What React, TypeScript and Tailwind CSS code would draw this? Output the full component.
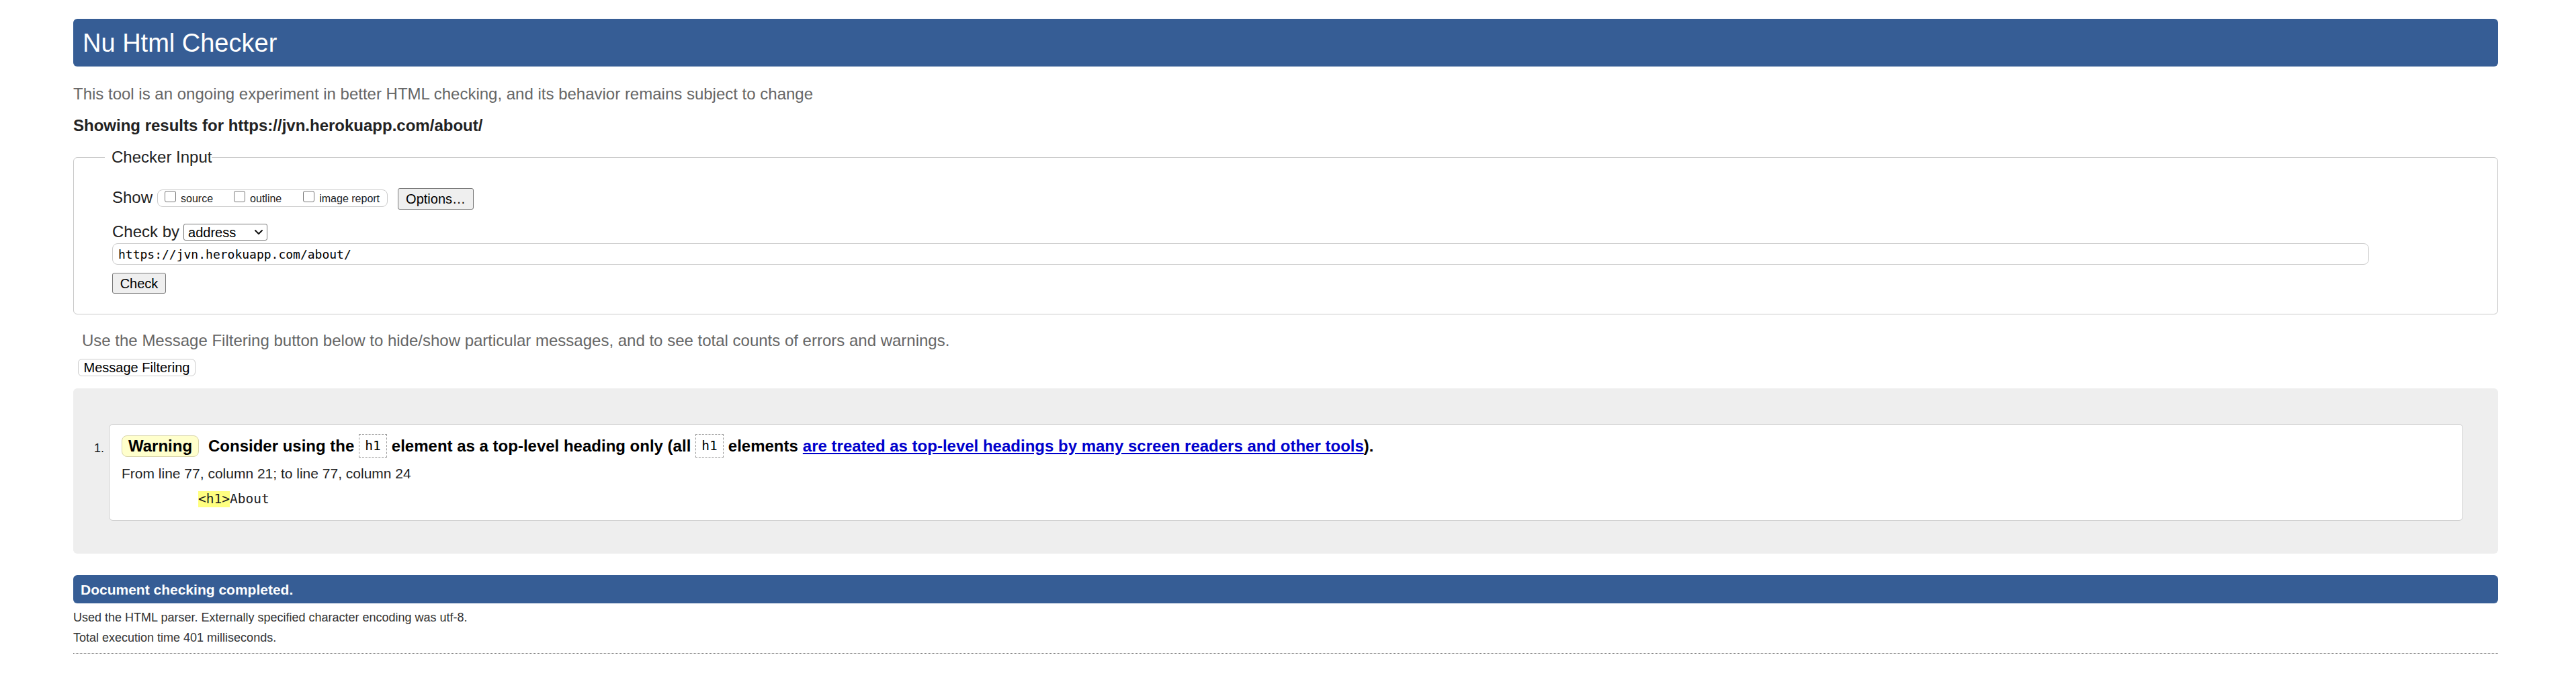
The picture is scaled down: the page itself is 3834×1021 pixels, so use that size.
export default function App() {
  return (
    <div className="min-h-screen bg-white font-['Liberation_Sans',Arial,sans-serif] text-[#222]">
      <div className="ml-[109px] w-[3609px] pt-[28px] pb-[40px]">
        <header className="flex h-[71px] items-center rounded-[6px] bg-[#365d95] pl-[14px]">
          <h1 className="text-[38px] font-normal leading-none text-white">Nu Html Checker</h1>
        </header>

        <p className="mt-[27px] text-[24px] leading-[28px] text-[#666]">
          This tool is an ongoing experiment in better HTML checking, and its behavior remains subject to change
        </p>
        <p className="mt-[19px] text-[24px] font-bold leading-[28px] text-[#222]">
          Showing results for https://jvn.herokuapp.com/about/
        </p>

        <fieldset className="mt-[19px] rounded-[6px] border border-[#c8c8c8] pb-[30px]">
          <legend className="ml-[46px] pl-[10px] text-[24px] leading-[28px] text-[#222]">Checker Input</legend>
          <div className="pl-[57px]">
            <div className="mt-[32px] flex items-start">
              <span className="text-[24px] leading-[28px]">Show</span>
              <div className="ml-[7px] mt-[2px] flex h-[26px] w-[343px] items-start rounded-[8px] border border-[#cccccc] pl-[10px]">
                <input type="checkbox" className="mt-[1px] h-[17px] w-[17px] appearance-none rounded-[3px] border border-[#767676] bg-white" />
                <span className="ml-[7px] mt-[4px] text-[16px] leading-[18px]">source</span>
                <input type="checkbox" className="ml-[31px] mt-[1px] h-[17px] w-[17px] appearance-none rounded-[3px] border border-[#767676] bg-white" />
                <span className="ml-[7px] mt-[4px] text-[16px] leading-[18px]">outline</span>
                <input type="checkbox" className="ml-[32px] mt-[1px] h-[17px] w-[17px] appearance-none rounded-[3px] border border-[#767676] bg-white" />
                <span className="ml-[7px] mt-[4px] text-[16px] leading-[18px]">image report</span>
              </div>
              <button className="ml-[15px] flex h-[32px] w-[113px] items-center justify-center rounded-[3px] border border-[#767676] bg-[#efefef] text-[20px] leading-none text-black">
                Options…
              </button>
            </div>

            <div className="mt-[19px] flex items-start">
              <span className="text-[24px] leading-[28px]">Check by</span>
              <div className="ml-[6px] mt-[2px] flex h-[25px] w-[125px] items-center justify-between rounded-[3px] border border-[#767676] bg-white pl-[6px] pr-[5px]">
                <span className="text-[20px] leading-none text-black">address</span>
                <svg width="14" height="9" viewBox="0 0 14 9" fill="none">
                  <polyline points="2,2 7,7 12,2" stroke="#111" strokeWidth="2" strokeLinecap="round" strokeLinejoin="round" />
                </svg>
              </div>
            </div>

            <input
              readOnly
              value="https://jvn.herokuapp.com/about/"
              className="mt-[3px] block h-[32px] w-[3359px] rounded-[8px] border border-[#cccccc] bg-white pl-[8px] font-['DejaVu_Sans_Mono',monospace] text-[18px] text-black outline-none"
            />

            <button className="mt-[12px] flex h-[31px] w-[80px] items-center justify-center rounded-[3px] border border-[#767676] bg-[#efefef] text-[20px] leading-none text-black">
              Check
            </button>
          </div>
        </fieldset>

        <p className="ml-[13px] mt-[25px] text-[24px] leading-[28px] text-[#666]">
          Use the Message Filtering button below to hide/show particular messages, and to see total counts of errors and warnings.
        </p>
        <button className="ml-[7px] mt-[13px] flex h-[26px] w-[175px] items-center justify-center rounded-[6px] border border-[#cccccc] bg-white text-[20px] leading-none text-black">
          Message Filtering
        </button>

        <div className="mt-[18px] flex rounded-[6px] bg-[#eeeeee] pb-[49px] pl-[31px] pr-[52px] pt-[53px]">
          <span className="mt-[25px] w-[22px] shrink-0 text-[18px] leading-[22px] text-[#222]">1.</span>
          <div className="flex-1 rounded-[6px] border border-[#cccccc] bg-white pb-[19px] pl-[18px] pt-[14px]">
            <div className="flex h-[35px] items-center text-[24px] font-bold leading-[28px] text-black">
              <span className="flex h-[32px] w-[115px] items-center justify-center rounded-[8px] border border-[#d9d5aa] bg-[#ffffcc]">
                Warning
              </span>
              <span className="ml-[14px] whitespace-pre">Consider using the</span>
              <code className="ml-[7px] flex h-[35px] items-center border border-dashed border-[#999] px-[8px] font-['DejaVu_Sans_Mono',monospace] text-[19.5px] font-normal">
                h1
              </code>
              <span className="ml-[7px] whitespace-pre">element as a top-level heading only (all</span>
              <code className="ml-[7px] flex h-[35px] items-center border border-dashed border-[#999] px-[8px] font-['DejaVu_Sans_Mono',monospace] text-[19.5px] font-normal">
                h1
              </code>
              <span className="ml-[7px] whitespace-pre">elements</span>
              <span className="ml-[7px] whitespace-pre">
                <a href="#" className="text-[#0000cc] underline">
                  are treated as top-level headings by many screen readers and other tools
                </a>
                ).
              </span>
            </div>
            <p className="mt-[12px] text-[21px] leading-[24px] text-[#222]">
              From line 77, column 21; to line 77, column 24
            </p>
            <p className="ml-[114px] mt-[14px] font-['DejaVu_Sans_Mono',monospace] text-[19.5px] leading-[24px] text-[#222]">
              <span className="inline-block bg-[#ffff80] leading-[24px]">&lt;h1&gt;</span>About
            </p>
          </div>
        </div>

        <div className="mt-[32px] flex h-[42px] items-center rounded-[6px] bg-[#365d95] pl-[11px]">
          <span className="text-[21px] font-bold leading-none text-white">Document checking completed.</span>
        </div>
        <p className="mt-[10px] text-[18px] leading-[22px] text-[#333]">
          Used the HTML parser. Externally specified character encoding was utf-8.
        </p>
        <p className="mt-[8px] text-[18px] leading-[22px] text-[#333]">Total execution time 401 milliseconds.</p>
        <div className="mt-[12px] h-0 border-t border-dotted border-[#777]" />
      </div>
    </div>
  );
}
